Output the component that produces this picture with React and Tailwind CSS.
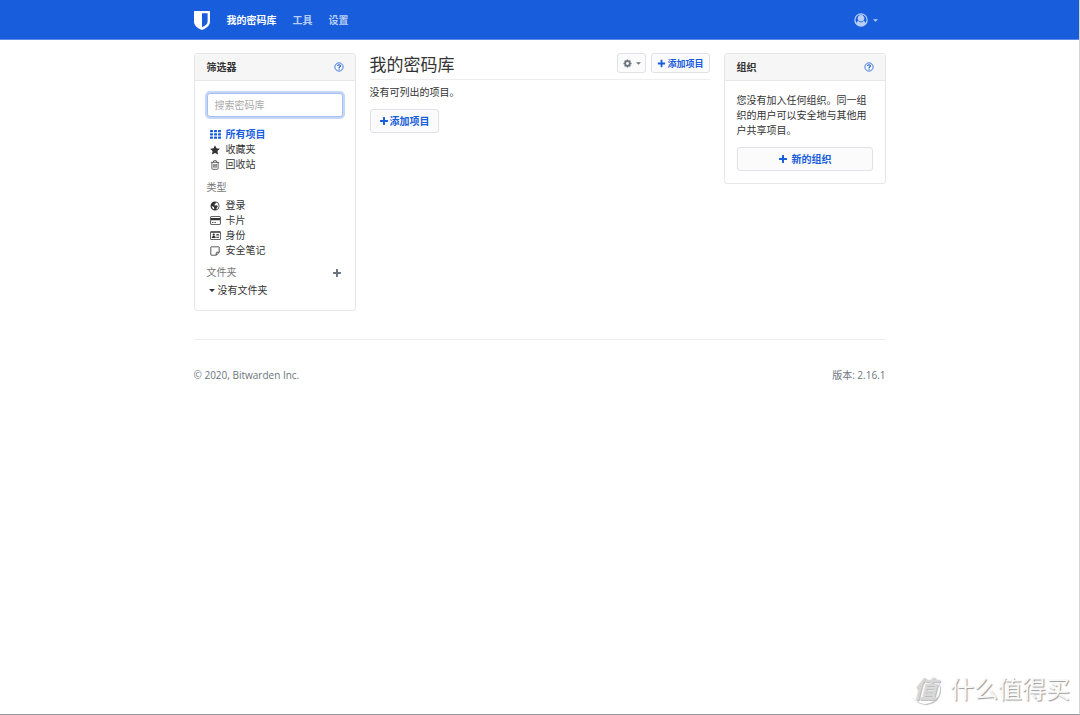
import React from "react";

function Icon({ box = "0 0 16 16", className = "size-[10px]", children }) {
  return (
    <svg viewBox={box} className={`shrink-0 ${className}`} fill="currentColor" aria-hidden="true">
      {children}
    </svg>
  );
}

const Plus = ({ className }) => (
  <Icon className={className}>
    <path d="M7.200 1.500h1.600c.5 0 .8.300.8.800v4.100h4.100c.5 0 .8.300.8.800v1.600c0 .5-.3.800-.8.800H9.600v4.100c0 .5-.3.800-.8.800H7.200c-.5 0-.8-.3-.8-.8V9.600H2.300c-.5 0-.8-.3-.8-.8V7.200c0-.5.3-.8.800-.8h4.100V2.300c0-.5.3-.8.800-.8z" />
  </Icon>
);

const Caret = ({ className = "w-[6px] h-[3px]" }) => (
  <Icon box="0 0 6 3" className={className}>
    <path d="M0 0h6L3 3z" />
  </Icon>
);

const Grid = () => (
  <Icon box="0 0 22 18" className="w-[11px] h-[9px]">
    {[0, 8, 16].map((x) =>
      [0, 6.5, 13].map((y) => <rect key={`${x}-${y}`} x={x} y={y} width="6" height="4.600" rx="1" />)
    )}
  </Icon>
);

const Star = () => (
  <Icon>
    <path d="M8 .2l2.400 4.900 5.500.8-4 3.800 1 5.500L8 12.600l-4.900 2.600 1-5.500-4-3.800 5.500-.8z" />
  </Icon>
);

const Trash = () => (
  <Icon>
    <path
      d="M1.300 3.700h13.400M5.300 3.500l.7-2.300h4l.7 2.300M3 3.900v9.500c0 .9.600 1.500 1.300 1.500h7.400c.7 0 1.300-.6 1.300-1.500V3.900M6 6.300v6M8 6.300v6M10 6.300v6"
      fill="none"
      stroke="currentColor"
      strokeWidth="1.200"
    />
  </Icon>
);

const Globe = () => (
  <Icon>
    <path
      fillRule="evenodd"
      d="M8 .9a7.100 7.100 0 1 1 0 14.200A7.100 7.100 0 0 1 8 .9zM10 2.300L8.300 3.300l.9.900-1.500 1-.9 1.700 2.100.4 1.900-.5 1.500 1.200-.3 1.700-1.500 1.600-.3 2.100c2.200-.7 3.700-2.900 3.700-5.400C13.900 5.400 12.400 3.100 10 2.300zM4.600 8.900l-1.800-.4c.2 2.100 1.600 3.900 3.500 4.700l.6-1.700-.7-1.800z"
    />
  </Icon>
);

const CreditCard = () => (
  <Icon box="0 0 22 18" className="w-[11px] h-[9px]">
    <path
      fillRule="evenodd"
      d="M2.500 .5h17a2 2 0 0 1 2 2v13a2 2 0 0 1-2 2h-17a2 2 0 0 1-2-2v-13a2 2 0 0 1 2-2zM2.200 2.200v2h17.600v-2zM2.200 8.500v7.400h17.600V8.500zM4 12.500h3V14H4zM8.500 12.500H12V14H8.500z"
    />
  </Icon>
);

const IdCard = () => (
  <Icon box="0 0 22 18" className="w-[11px] h-[9px]">
    <path
      fillRule="evenodd"
      d="M2 .5h18A1.500 1.500 0 0 1 21.500 2v14a1.500 1.500 0 0 1-1.500 1.500H2A1.500 1.500 0 0 1 .5 16V2A1.500 1.500 0 0 1 2 .5zM2 3.500V16h18V3.500z"
    />
    <circle cx="7.500" cy="7.300" r="2.300" />
    <path d="M3.600 13.800c0-2.900 1.400-4 3.900-4s3.900 1.100 3.900 4zM12.500 6H18v1.500h-5.500zM12.500 9H18v1.500h-5.500zM12.500 12H18v1.500h-5.500z" />
  </Icon>
);

const Note = () => (
  <Icon>
    <path
      d="M2 1.300h12c.4 0 .7.3.7.7v8.200l-4.500 4.500H2a.7.7 0 0 1-.7-.7V2c0-.4.3-.7.7-.7zM14.500 10h-3.700c-.5 0-.8.300-.8.800v3.700"
      fill="none"
      stroke="currentColor"
      strokeWidth="1.300"
    />
  </Icon>
);

const Help = () => (
  <Icon>
    <circle cx="8" cy="8" r="6.600" fill="none" stroke="currentColor" strokeWidth="1.300" />
    <path d="M5.600 6.300C5.900 4.900 6.800 4.400 8 4.400c1.400 0 2.300.8 2.300 1.800C10.300 7.700 8.200 7.700 8.200 9.500" fill="none" stroke="currentColor" strokeWidth="1.800" />
    <rect x="7.200" y="10.500" width="1.900" height="1.800" />
  </Icon>
);

const Cog = () => (
  <Icon className="size-[9px]">
    <circle cx="8" cy="8" r="4.100" fill="none" stroke="currentColor" strokeWidth="3" />
    {[0, 45, 90, 135, 180, 225, 270, 315].map((a) => (
      <rect key={a} x="6.600" y="0.800" width="2.800" height="3" rx=".4" transform={`rotate(${a} 8 8)`} />
    ))}
  </Icon>
);

const User = () => (
  <Icon className="size-[14px]">
    <path
      fillRule="evenodd"
      d="M8 .3a7.700 7.700 0 1 1 0 15.400A7.700 7.700 0 0 1 8 .3zM8 1.600a6.400 6.400 0 0 0-5.200 10.100c.4-1.700 1.200-2.800 2.700-2.900A3.700 3.700 0 1 1 10.500 8.800c1.500.1 2.300 1.200 2.700 2.900A6.400 6.400 0 0 0 8 1.600z"
    />
    <circle cx="8" cy="6.200" r="3" fill="#b9cef5" />
    <path d="M5.500 9.300C7 10.400 9 10.400 10.500 9.300" fill="none" stroke="#175ddc" strokeWidth=".9" />
  </Icon>
);

const Shield = () => (
  <Icon box="0 0 16 19" className="w-4 h-[19px]">
    <path
      fillRule="evenodd"
      d="M.8 0h14.400c.5 0 .8.300.8.800v9.700c0 4-3.200 6.600-8 8.500-4.800-1.900-8-4.500-8-8.500V.8C0 .3.300 0 .8 0zM8 2.300v14c3.400-1.500 5.600-3.300 5.600-5.800V2.300z"
    />
  </Icon>
);

function Row({ icon, children, active }) {
  return (
    <li className="h-[15px]">
      <a
        href="#"
        className={`flex items-center gap-[2px] ${active ? "font-bold text-[#175ddc]" : "text-[#333]"}`}
      >
        <span className="flex w-[17px] justify-center">{icon}</span>
        {children}
      </a>
    </li>
  );
}

function Card({ title, children }) {
  return (
    <section className="rounded-[3px] border border-[#e7e7e7] bg-white">
      <header className="flex h-[27px] items-center justify-between border-b border-[#e7e7e7] bg-[#f6f6f6] pr-[11px] pl-3">
        <h2 className="font-bold">{title}</h2>
        <a href="#" aria-label="帮助" className="text-[#175ddc]">
          <Help />
        </a>
      </header>
      {children}
    </section>
  );
}

const button =
  "flex items-center justify-center rounded-[3px] border border-[#dfe2e7] bg-[#fbfbfb] font-bold text-[#175ddc]";

export default function App() {
  return (
    <div className="relative min-h-screen border-r border-b border-r-[#d4d4d4] border-b-[#9298a3] bg-white font-['Open_Sans','Noto_Sans_CJK_SC',sans-serif] text-[10px] leading-[15px] text-[#333]">
      <nav className="h-10 border-b border-[#5b8ce8] bg-[#175ddc]">
        <div className="mx-auto flex h-full max-w-[692px] items-center pt-px text-[#b9cef5]">
          <a href="#" aria-label="Bitwarden" className="mr-[17px] text-white">
            <Shield />
          </a>
          <div className="flex gap-4 font-bold">
            <a href="#" className="text-white">我的密码库</a>
            <a href="#">工具</a>
            <a href="#">设置</a>
          </div>
          <button type="button" aria-label="账户" className="mr-2 ml-auto flex items-center gap-[5px]">
            <User />
            <Caret className="h-[3px] w-[5px]" />
          </button>
        </div>
      </nav>

      <div className="mx-auto max-w-[692px] pt-[13px]">
        <div className="grid grid-cols-[162px_1fr_162px] items-start gap-[14px]">
          <Card title="筛选器">
            <div className="px-3 pt-3 pb-[12px]">
              <input
                type="text"
                aria-label="搜索密码库"
                placeholder="搜索密码库"
                className="block h-6 w-full rounded-[3px] border border-[#a3c0f5] bg-white px-[7px] shadow-[0_0_0_2px_#c5d6f6] outline-none placeholder:text-[#aaa]"
              />
              <ul className="mt-[10px]">
                <Row icon={<Grid />} active>所有项目</Row>
                <Row icon={<Star />}>收藏夹</Row>
                <Row icon={<Trash />}>回收站</Row>
              </ul>
              <h3 className="mt-2 text-[#777]">类型</h3>
              <ul className="mt-[3px]">
                <Row icon={<Globe />}>登录</Row>
                <Row icon={<CreditCard />}>卡片</Row>
                <Row icon={<IdCard />}>身份</Row>
                <Row icon={<Note />}>安全笔记</Row>
              </ul>
              <div className="mt-[7px] flex items-center justify-between text-[#777]">
                <h3>文件夹</h3>
                <button type="button" aria-label="添加文件夹" className="mr-px text-[#6c757d]">
                  <Plus />
                </button>
              </div>
              <button type="button" className="mt-[3px] flex items-center gap-[3px] pl-[2px]">
                <Caret />
                没有文件夹
              </button>
            </div>
          </Card>

          <main>
            <div className="flex h-[27px] items-start justify-between border-b border-[#eee]">
              <h1 className="text-[17px] leading-[24px]">我的密码库</h1>
              <div className="flex gap-[5px] text-[9px]">
                <button
                  type="button"
                  aria-label="选项"
                  className="flex h-5 w-[29px] items-center justify-center gap-1 rounded-[3px] border border-[#dfe2e7] bg-[#fbfbfb] text-[#6c757d]"
                >
                  <Cog />
                  <Caret className="h-[3px] w-[5px]" />
                </button>
                <button type="button" className={`${button} h-5 gap-px px-[5px]`}>
                  <Plus className="size-[9px]" />
                  添加项目
                </button>
              </div>
            </div>
            <p className="mt-[5px]">没有可列出的项目。</p>
            <button type="button" className={`${button} mt-[9px] h-6 gap-px px-2`}>
              <Plus />
              添加项目
            </button>
          </main>

          <Card title="组织">
            <div className="p-3">
              <p>您没有加入任何组织。同一组织的用户可以安全地与其他用户共享项目。</p>
              <button type="button" className={`${button} mt-[9px] h-6 w-full gap-1`}>
                <Plus />
                新的组织
              </button>
            </div>
          </Card>
        </div>

        <footer className="mt-7 flex justify-between border-t border-[#eee] pt-7 text-[#6c757d]">
          <span>© 2020, Bitwarden Inc.</span>
          <span>版本: 2.16.1</span>
        </footer>
      </div>

      <div className="absolute right-[9px] bottom-[10px] flex items-center gap-[10px] text-[#f8f8f8]">
        <span className="flex size-[30px] items-center justify-center rounded-full text-[24px] leading-[30px] font-bold text-[#d8d8d8] italic shadow-[1px_1px_1px_#bbb] [text-shadow:1px_1px_0_#bbb]">
          值
        </span>
        <span className="text-[24px] leading-[30px] [text-shadow:1px_1px_1px_#999]">什么值得买</span>
      </div>
    </div>
  );
}
